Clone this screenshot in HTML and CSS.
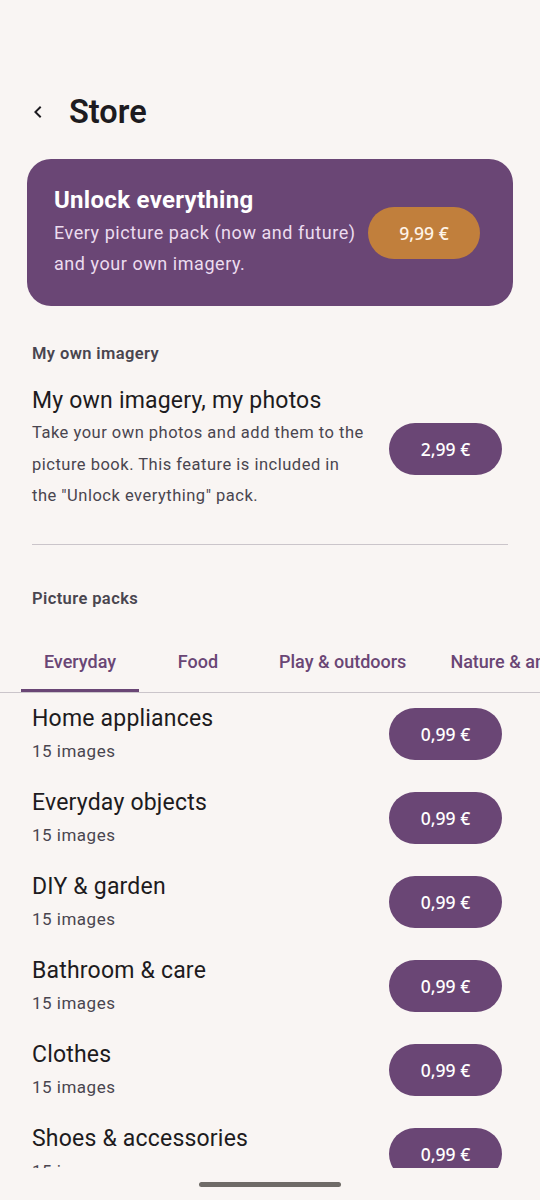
FILE: index.html
```html
<!DOCTYPE html>
<html lang="en">
  <head>
    <meta charset="UTF-8">
    <title>Store</title>
    <link rel="stylesheet" href="styles.css">
  </head>
  <body>
    <div class="screen">
      <div class="top-bar">
        <span class="back">
          <svg width="24" height="24" viewBox="0 0 24 24"><path d="M15.4 16.6 10.8 12l4.6-4.6L14 6l-6 6 6 6z" fill="#1d1b20"/></svg>
        </span>
        <h1>Store</h1>
      </div>

      <div class="content">
        <div class="unlock-card">
          <div class="unlock-text">
            <div class="unlock-title">Unlock everything</div>
            <div class="unlock-sub">Every picture pack (now and future) and your own imagery.</div>
          </div>
          <button class="price orange">9,99 €</button>
        </div>

        <div class="section-title">My own imagery</div>
        <div class="own-row">
          <div class="own-text">
            <div class="item-title">My own imagery, my photos</div>
            <div class="own-desc">Take your own photos and add them to the picture book. This feature is included in the "Unlock everything" pack.</div>
          </div>
          <button class="price">2,99 €</button>
        </div>

        <hr class="divider">

        <div class="section-title packs">Picture packs</div>

        <div class="tabs">
          <div class="tab active">Everyday</div>
          <div class="tab">Food</div>
          <div class="tab">Play &amp; outdoors</div>
          <div class="tab">Nature &amp; animals</div>
        </div>

        <div class="pack-list">
          <div class="pack">
            <div class="pack-text">
              <div class="item-title">Home appliances</div>
              <div class="pack-count">15 images</div>
            </div>
            <button class="price">0,99 €</button>
          </div>
          <div class="pack">
            <div class="pack-text">
              <div class="item-title">Everyday objects</div>
              <div class="pack-count">15 images</div>
            </div>
            <button class="price">0,99 €</button>
          </div>
          <div class="pack">
            <div class="pack-text">
              <div class="item-title">DIY &amp; garden</div>
              <div class="pack-count">15 images</div>
            </div>
            <button class="price">0,99 €</button>
          </div>
          <div class="pack">
            <div class="pack-text">
              <div class="item-title">Bathroom &amp; care</div>
              <div class="pack-count">15 images</div>
            </div>
            <button class="price">0,99 €</button>
          </div>
          <div class="pack">
            <div class="pack-text">
              <div class="item-title">Clothes</div>
              <div class="pack-count">15 images</div>
            </div>
            <button class="price">0,99 €</button>
          </div>
          <div class="pack">
            <div class="pack-text">
              <div class="item-title">Shoes &amp; accessories</div>
              <div class="pack-count">15 images</div>
            </div>
            <button class="price">0,99 €</button>
          </div>
        </div>
      </div>

      <div class="home-bar"></div>
    </div>
  </body>
</html>
```

FILE: styles.css
```css
body {
  margin: 0;
  background-color: #f9f5f3;
  font-family: Roboto, "Liberation Sans", sans-serif;
  color: #1d1b20;
}
.screen {
  width: 540px;
  height: 1200px;
  overflow: hidden;
}
.top-bar {
  display: flex;
  align-items: center;
  height: 64px;
  margin-top: 80px;
  padding-left: 26px;
}
.back {
  display: flex;
  width: 24px;
  height: 24px;
}
h1 {
  margin: 0 0 0 19px;
  font-size: 32.5px;
  font-weight: 600;
  letter-spacing: 0;
}
.content {
  height: 1024px;
  overflow: hidden;
}
.unlock-card {
  display: flex;
  align-items: center;
  gap: 8px;
  margin: 15px 27px 0 27px;
  padding: 27px 33px 27px 27px;
  background-color: #6a4675;
  border-radius: 24px;
}
.unlock-text {
  flex: 1;
}
.unlock-title {
  font-size: 24px;
  line-height: 28px;
  font-weight: 700;
  color: #fff;
  letter-spacing: 0.3px;
}
.unlock-sub {
  margin-top: 3px;
  font-size: 18px;
  line-height: 31px;
  color: #ecdcef;
  letter-spacing: 0.55px;
}
.price {
  flex: none;
  width: 113px;
  height: 52px;
  border: none;
  border-radius: 26px;
  background-color: #6a4675;
  color: #fff;
  font-family: "Noto Sans", "Open Sans", sans-serif;
  font-size: 17.5px;
  font-weight: 500;
}
.orange {
  width: 112px;
  background-color: #c17f3c;
  color: #fff4e8;
}
.section-title {
  margin: 36px 32px 0 32px;
  font-size: 16.5px;
  line-height: 24px;
  font-weight: 600;
  color: #49454f;
  letter-spacing: 0.4px;
}
.section-title.packs {
  margin-top: 42px;
}
.own-row {
  display: flex;
  align-items: center;
  gap: 23px;
  margin-top: 21px;
  padding: 0 38px 0 32px;
}
.own-text {
  flex: 1;
}
.item-title {
  font-size: 23px;
  line-height: 28px;
  color: #1d1b20;
  letter-spacing: 0.2px;
}
.own-desc {
  margin-top: 2px;
  font-size: 16.5px;
  line-height: 31.5px;
  color: #49454f;
  letter-spacing: 0.5px;
}
.divider {
  margin: 32px 32px 0 32px;
  border: none;
  border-top: 1.5px solid #cbc5ca;
}
.tabs {
  display: flex;
  margin-top: 30px;
  padding-left: 21px;
  border-bottom: 1px solid #cbc5ca;
  white-space: nowrap;
}
.tab {
  flex: none;
  min-width: 118px;
  box-sizing: border-box;
  padding: 9px 22px 15px 22px;
  text-align: center;
  font-size: 18px;
  line-height: 24px;
  font-weight: 500;
  color: #6a4675;
  border-bottom: 3px solid transparent;
}
.tab.active {
  border-bottom-color: #6a4675;
  border-radius: 2px 2px 0 0;
}
.pack {
  display: flex;
  align-items: center;
  gap: 16px;
  padding: 12px 38px 14px 32px;
}
.pack-text {
  flex: 1;
}
.pack-count {
  margin-top: 6px;
  font-size: 17px;
  line-height: 24px;
  color: #49454f;
  letter-spacing: 0.5px;
}
.home-bar {
  width: 142px;
  height: 5px;
  margin: 14px auto 0 auto;
  border-radius: 3px;
  background-color: #6f6b67;
}
```
